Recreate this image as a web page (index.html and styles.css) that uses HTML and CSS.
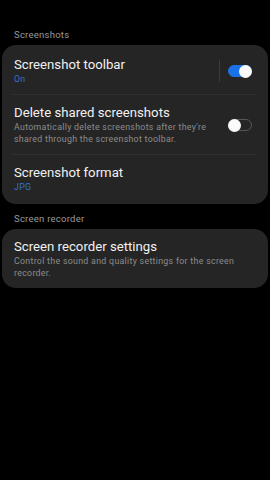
FILE: index.html
```html
<!DOCTYPE html>
<html lang="en">

<head>
  <meta charset="UTF-8" />
  <title>Screenshots and screen recorder</title>
  <link rel="stylesheet" href="styles.css">
</head>

<body>
  <div class="page">
    <!-- Screenshots -->
    <h2 class="sec-title">Screenshots</h2>
    <div class="card">
      <div class="row first">
        <div class="txt">
          <div class="ttl">Screenshot toolbar</div>
          <div class="sub blue">On</div>
        </div>
        <span class="vline"></span>
        <span class="switch on"></span>
      </div>
      <div class="line"></div>
      <div class="row">
        <div class="txt">
          <div class="ttl">Delete shared screenshots</div>
          <div class="sub">Automatically delete screenshots after they're shared through the screenshot toolbar.</div>
        </div>
        <span class="switch"></span>
      </div>
      <div class="line"></div>
      <div class="row last">
        <div class="txt">
          <div class="ttl">Screenshot format</div>
          <div class="sub blue">JPG</div>
        </div>
      </div>
    </div>

    <!-- Screen recorder -->
    <h2 class="sec-title">Screen recorder</h2>
    <div class="card">
      <div class="row">
        <div class="txt">
          <div class="ttl">Screen recorder settings</div>
          <div class="sub">Control the sound and quality settings for the screen recorder.</div>
        </div>
      </div>
    </div>
  </div>
</body>

</html>
```

FILE: styles.css
```css
/* reset */
html,
body {
  margin: 0;
  padding: 0;
}

body {
  background-color: #000;
  font-family: Roboto, "Noto Sans", sans-serif;
  color: #eee;
}

.page {
  width: 270px;
  height: 480px;
  padding-top: 28px;
  box-sizing: border-box;
}

/* section header */
.sec-title {
  margin: 0 0 3px;
  padding: 0 14px;
  font-size: 9.5px;
  font-weight: normal;
  line-height: 14px;
  letter-spacing: 0.25px;
  color: #9a9a9a;
}

.card + .sec-title {
  margin-top: 8px;
}

/* card box */
.card {
  margin: 0 2px;
  background-color: #252525;
  border-radius: 14px;
}

.row {
  display: flex;
  align-items: center;
  padding: 10px 16px 9px 12px;
}

.row.first {
  padding-top: 12px;
}

.row.last {
  padding-bottom: 11px;
}

.txt {
  flex: 1;
}

.ttl {
  font-size: 13.2px;
  line-height: 16px;
  color: #f1f1f1;
}

.sub {
  font-size: 8.8px;
  line-height: 12px;
  letter-spacing: 0.3px;
  color: #8c8c8c;
  padding-right: 14px;
}

.sub.blue {
  color: #3571c9;
}

/* divider */
.line {
  height: 1px;
  margin: 0 11px;
  background-color: #313131;
}

.vline {
  width: 1px;
  height: 22px;
  margin-right: 8px;
  background-color: #3a3a3a;
}

/* toggle switch */
.switch {
  position: relative;
  width: 24px;
  height: 12px;
  box-sizing: border-box;
  border: 1px solid #555;
  border-radius: 6px;
}

.switch::after {
  content: '';
  position: absolute;
  top: -1.5px;
  left: -1px;
  width: 13px;
  height: 13px;
  border-radius: 50%;
  background-color: #fafafa;
}

.switch.on {
  background-color: #1b72e8;
  border-color: #1b72e8;
}

.switch.on::after {
  left: auto;
  right: -1px;
}
```
